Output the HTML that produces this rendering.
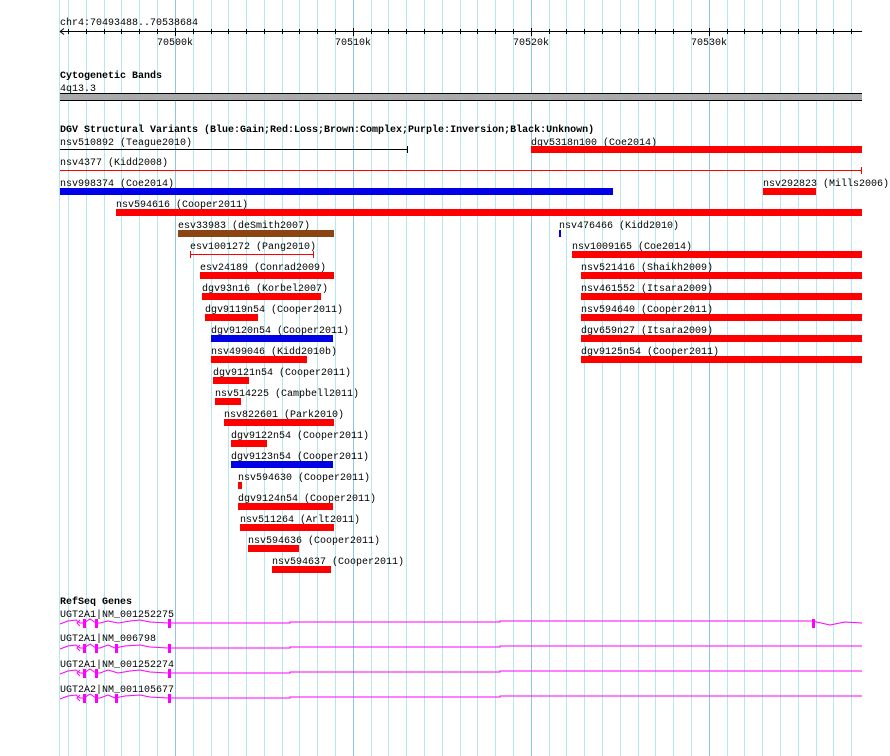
<!DOCTYPE html>
<html><head><meta charset="utf-8"><style>
html,body{margin:0;padding:0;background:#fff;width:890px;height:756px;overflow:hidden}
svg text{font-family:"Liberation Mono","DejaVu Sans Mono",monospace;font-size:10px;fill:#000}
.b{font-weight:bold}
</style></head><body>
<svg width="890" height="756" xmlns="http://www.w3.org/2000/svg">
<g stroke="#b4e8ee" stroke-width="1">
<line x1="59.5" y1="0" x2="59.5" y2="756"/>
<line x1="68.5" y1="0" x2="68.5" y2="756"/><line x1="86.5" y1="0" x2="86.5" y2="756"/><line x1="104.5" y1="0" x2="104.5" y2="756"/><line x1="121.5" y1="0" x2="121.5" y2="756"/><line x1="139.5" y1="0" x2="139.5" y2="756"/><line x1="157.5" y1="0" x2="157.5" y2="756"/>
<line x1="193.5" y1="0" x2="193.5" y2="756"/><line x1="211.5" y1="0" x2="211.5" y2="756"/><line x1="228.5" y1="0" x2="228.5" y2="756"/><line x1="246.5" y1="0" x2="246.5" y2="756"/><line x1="264.5" y1="0" x2="264.5" y2="756"/><line x1="282.5" y1="0" x2="282.5" y2="756"/><line x1="299.5" y1="0" x2="299.5" y2="756"/><line x1="317.5" y1="0" x2="317.5" y2="756"/><line x1="335.5" y1="0" x2="335.5" y2="756"/>
<line x1="371.5" y1="0" x2="371.5" y2="756"/><line x1="388.5" y1="0" x2="388.5" y2="756"/><line x1="406.5" y1="0" x2="406.5" y2="756"/><line x1="424.5" y1="0" x2="424.5" y2="756"/><line x1="442.5" y1="0" x2="442.5" y2="756"/><line x1="460.5" y1="0" x2="460.5" y2="756"/><line x1="477.5" y1="0" x2="477.5" y2="756"/><line x1="495.5" y1="0" x2="495.5" y2="756"/><line x1="513.5" y1="0" x2="513.5" y2="756"/>
<line x1="549.5" y1="0" x2="549.5" y2="756"/><line x1="566.5" y1="0" x2="566.5" y2="756"/><line x1="584.5" y1="0" x2="584.5" y2="756"/><line x1="602.5" y1="0" x2="602.5" y2="756"/><line x1="620.5" y1="0" x2="620.5" y2="756"/><line x1="638.5" y1="0" x2="638.5" y2="756"/><line x1="655.5" y1="0" x2="655.5" y2="756"/><line x1="673.5" y1="0" x2="673.5" y2="756"/><line x1="691.5" y1="0" x2="691.5" y2="756"/>
<line x1="727.5" y1="0" x2="727.5" y2="756"/><line x1="744.5" y1="0" x2="744.5" y2="756"/><line x1="762.5" y1="0" x2="762.5" y2="756"/><line x1="780.5" y1="0" x2="780.5" y2="756"/><line x1="798.5" y1="0" x2="798.5" y2="756"/><line x1="816.5" y1="0" x2="816.5" y2="756"/><line x1="833.5" y1="0" x2="833.5" y2="756"/><line x1="851.5" y1="0" x2="851.5" y2="756"/>
</g>
<g stroke="#8cc6e2" stroke-width="1">
<line x1="175.5" y1="0" x2="175.5" y2="756"/><line x1="353.5" y1="0" x2="353.5" y2="756"/><line x1="531.5" y1="0" x2="531.5" y2="756"/><line x1="709.5" y1="0" x2="709.5" y2="756"/>
</g>
<text x="60" y="25">chr4:70493488..70538684</text>
<g stroke="#000" stroke-width="1">
<line x1="60" y1="31.5" x2="862" y2="31.5"/>
<line x1="60" y1="31.5" x2="64" y2="28.5"/><line x1="60" y1="31.5" x2="64" y2="34.5"/>
<line x1="68.5" y1="29" x2="68.5" y2="34"/><line x1="86.5" y1="29" x2="86.5" y2="34"/><line x1="104.5" y1="29" x2="104.5" y2="34"/><line x1="121.5" y1="29" x2="121.5" y2="34"/><line x1="139.5" y1="29" x2="139.5" y2="34"/><line x1="157.5" y1="29" x2="157.5" y2="34"/><line x1="175.5" y1="28" x2="175.5" y2="36"/><line x1="193.5" y1="29" x2="193.5" y2="34"/><line x1="211.5" y1="29" x2="211.5" y2="34"/><line x1="228.5" y1="29" x2="228.5" y2="34"/><line x1="246.5" y1="29" x2="246.5" y2="34"/><line x1="264.5" y1="29" x2="264.5" y2="34"/><line x1="282.5" y1="29" x2="282.5" y2="34"/><line x1="299.5" y1="29" x2="299.5" y2="34"/><line x1="317.5" y1="29" x2="317.5" y2="34"/><line x1="335.5" y1="29" x2="335.5" y2="34"/><line x1="353.5" y1="28" x2="353.5" y2="36"/><line x1="371.5" y1="29" x2="371.5" y2="34"/><line x1="388.5" y1="29" x2="388.5" y2="34"/><line x1="406.5" y1="29" x2="406.5" y2="34"/><line x1="424.5" y1="29" x2="424.5" y2="34"/><line x1="442.5" y1="29" x2="442.5" y2="34"/><line x1="460.5" y1="29" x2="460.5" y2="34"/><line x1="477.5" y1="29" x2="477.5" y2="34"/><line x1="495.5" y1="29" x2="495.5" y2="34"/><line x1="513.5" y1="29" x2="513.5" y2="34"/><line x1="531.5" y1="28" x2="531.5" y2="36"/><line x1="549.5" y1="29" x2="549.5" y2="34"/><line x1="566.5" y1="29" x2="566.5" y2="34"/><line x1="584.5" y1="29" x2="584.5" y2="34"/><line x1="602.5" y1="29" x2="602.5" y2="34"/><line x1="620.5" y1="29" x2="620.5" y2="34"/><line x1="638.5" y1="29" x2="638.5" y2="34"/><line x1="655.5" y1="29" x2="655.5" y2="34"/><line x1="673.5" y1="29" x2="673.5" y2="34"/><line x1="691.5" y1="29" x2="691.5" y2="34"/><line x1="709.5" y1="28" x2="709.5" y2="36"/><line x1="727.5" y1="29" x2="727.5" y2="34"/><line x1="744.5" y1="29" x2="744.5" y2="34"/><line x1="762.5" y1="29" x2="762.5" y2="34"/><line x1="780.5" y1="29" x2="780.5" y2="34"/><line x1="798.5" y1="29" x2="798.5" y2="34"/><line x1="816.5" y1="29" x2="816.5" y2="34"/><line x1="833.5" y1="29" x2="833.5" y2="34"/><line x1="851.5" y1="29" x2="851.5" y2="34"/>
</g>
<text x="157" y="45">70500k</text><text x="335" y="45">70510k</text><text x="513" y="45">70520k</text><text x="691" y="45">70530k</text>
<text x="60" y="78" class="b">Cytogenetic Bands</text>
<text x="60" y="91">4q13.3</text>
<rect x="60" y="93" width="802" height="8" fill="#aaaaaa"/>
<line x1="60" y1="93.5" x2="862" y2="93.5" stroke="#000"/>
<line x1="60" y1="100.5" x2="862" y2="100.5" stroke="#000"/>
<text x="60" y="132" class="b">DGV Structural Variants (Blue:Gain;Red:Loss;Brown:Complex;Purple:Inversion;Black:Unknown)</text>
<g>
<text x="60" y="145">nsv510892 (Teague2010)</text>
<line x1="60" y1="149.5" x2="407" y2="149.5" stroke="#000"/><line x1="407.5" y1="146" x2="407.5" y2="153" stroke="#000"/>
<text x="531" y="145">dgv5318n100 (Coe2014)</text>
<rect x="531" y="146" width="331" height="7" fill="#f00"/>
<text x="60" y="165">nsv4377 (Kidd2008)</text>
<line x1="60" y1="170.5" x2="862" y2="170.5" stroke="#f00"/><line x1="861.5" y1="167" x2="861.5" y2="174" stroke="#f00"/>
<text x="60" y="186">nsv998374 (Coe2014)</text>
<rect x="60" y="188" width="553" height="7" fill="#0000e6"/>
<text x="763" y="186">nsv292823 (Mills2006)</text>
<rect x="763" y="188" width="53" height="7" fill="#f00"/>
<text x="116" y="207">nsv594616 (Cooper2011)</text>
<rect x="116" y="209" width="746" height="7" fill="#f00"/>
<text x="178" y="228">esv33983 (deSmith2007)</text>
<rect x="178" y="230" width="156" height="7" fill="#8b4513"/>
<text x="559" y="228">nsv476466 (Kidd2010)</text>
<rect x="559" y="230" width="2" height="7" fill="#0000e6"/>
<text x="190" y="249">esv1001272 (Pang2010)</text>
<line x1="190" y1="254.5" x2="314" y2="254.5" stroke="#f00"/><line x1="190.5" y1="251" x2="190.5" y2="258" stroke="#f00"/><line x1="313.5" y1="251" x2="313.5" y2="258" stroke="#f00"/>
<text x="572" y="249">nsv1009165 (Coe2014)</text>
<rect x="572" y="251" width="290" height="7" fill="#f00"/>
<text x="200" y="270">esv24189 (Conrad2009)</text>
<rect x="200" y="272" width="134" height="7" fill="#f00"/>
<text x="581" y="270">nsv521416 (Shaikh2009)</text>
<rect x="581" y="272" width="281" height="7" fill="#f00"/>
<text x="202" y="291">dgv93n16 (Korbel2007)</text>
<rect x="202" y="293" width="119" height="7" fill="#f00"/>
<text x="581" y="291">nsv461552 (Itsara2009)</text>
<rect x="581" y="293" width="281" height="7" fill="#f00"/>
<text x="205" y="312">dgv9119n54 (Cooper2011)</text>
<rect x="205" y="314" width="53" height="7" fill="#f00"/>
<text x="581" y="312">nsv594640 (Cooper2011)</text>
<rect x="581" y="314" width="281" height="7" fill="#f00"/>
<text x="211" y="333">dgv9120n54 (Cooper2011)</text>
<rect x="211" y="335" width="122" height="7" fill="#0000e6"/>
<text x="581" y="333">dgv659n27 (Itsara2009)</text>
<rect x="581" y="335" width="281" height="7" fill="#f00"/>
<text x="211" y="354">nsv499046 (Kidd2010b)</text>
<rect x="211" y="356" width="96" height="7" fill="#f00"/>
<text x="581" y="354">dgv9125n54 (Cooper2011)</text>
<rect x="581" y="356" width="281" height="7" fill="#f00"/>
<text x="213" y="375">dgv9121n54 (Cooper2011)</text>
<rect x="213" y="377" width="36" height="7" fill="#f00"/>
<text x="215" y="396">nsv514225 (Campbell2011)</text>
<rect x="215" y="398" width="26" height="7" fill="#f00"/>
<text x="224" y="417">nsv822601 (Park2010)</text>
<rect x="224" y="419" width="110" height="7" fill="#f00"/>
<text x="231" y="438">dgv9122n54 (Cooper2011)</text>
<rect x="231" y="440" width="36" height="7" fill="#f00"/>
<text x="231" y="459">dgv9123n54 (Cooper2011)</text>
<rect x="231" y="461" width="102" height="7" fill="#0000e6"/>
<text x="238" y="480">nsv594630 (Cooper2011)</text>
<rect x="238" y="482" width="4" height="7" fill="#f00"/>
<text x="238" y="501">dgv9124n54 (Cooper2011)</text>
<rect x="238" y="503" width="95" height="7" fill="#f00"/>
<text x="240" y="522">nsv511264 (Arlt2011)</text>
<rect x="240" y="524" width="94" height="7" fill="#f00"/>
<text x="248" y="543">nsv594636 (Cooper2011)</text>
<rect x="248" y="545" width="51" height="7" fill="#f00"/>
<text x="272" y="564">nsv594637 (Cooper2011)</text>
<rect x="272" y="566" width="59" height="7" fill="#f00"/>
</g>
<text x="60" y="604" class="b">RefSeq Genes</text>
<g fill="none" stroke="#ff00ff" stroke-width="1">
<polyline points="60,624 68,621 76,620 80,623 84,623 90,619 96,623 100,623 108,621 118,623 130,621 140,620 150,622 168,623 210,623 290,623 290,622 500,622 500,621 812,621 830,625 845,622 862,623"/>
<polyline points="60,649 68,646 76,645 80,648 84,648 90,644 96,648 100,648 108,645 115,648 125,646 140,645 150,647 168,648 290,648 290,647 500,647 500,646 862,646"/>
<polyline points="60,674 68,671 76,670 80,673 84,673 90,669 96,673 100,673 108,670 118,673 130,671 140,670 150,672 168,673 290,673 290,672 500,672 500,671 862,671"/>
<polyline points="60,699 68,696 76,695 80,698 84,698 90,694 96,698 100,698 108,695 115,698 125,696 140,695 150,697 168,698 290,698 290,697 500,697 500,696 862,696"/>
<polyline points="80,620 77,623 80,626"/><polyline points="80,645 77,648 80,651"/><polyline points="80,670 77,673 80,676"/><polyline points="80,695 77,698 80,701"/>
</g>
<g fill="#ff00ff">
<rect x="83" y="619" width="3" height="9"/><rect x="95" y="619" width="3" height="9"/><rect x="168" y="619" width="3" height="9"/><rect x="812" y="619" width="3" height="9"/>
<rect x="83" y="644" width="3" height="9"/><rect x="95" y="644" width="3" height="9"/><rect x="115" y="644" width="3" height="9"/><rect x="168" y="644" width="3" height="9"/>
<rect x="83" y="669" width="3" height="9"/><rect x="95" y="669" width="3" height="9"/><rect x="168" y="669" width="3" height="9"/>
<rect x="83" y="694" width="3" height="9"/><rect x="95" y="694" width="3" height="9"/><rect x="115" y="694" width="3" height="9"/><rect x="168" y="694" width="3" height="9"/>
</g>
<text x="60" y="617">UGT2A1|NM_001252275</text>
<text x="60" y="641">UGT2A1|NM_006798</text>
<text x="60" y="667">UGT2A1|NM_001252274</text>
<text x="60" y="692">UGT2A2|NM_001105677</text>
</svg>
</body></html>
